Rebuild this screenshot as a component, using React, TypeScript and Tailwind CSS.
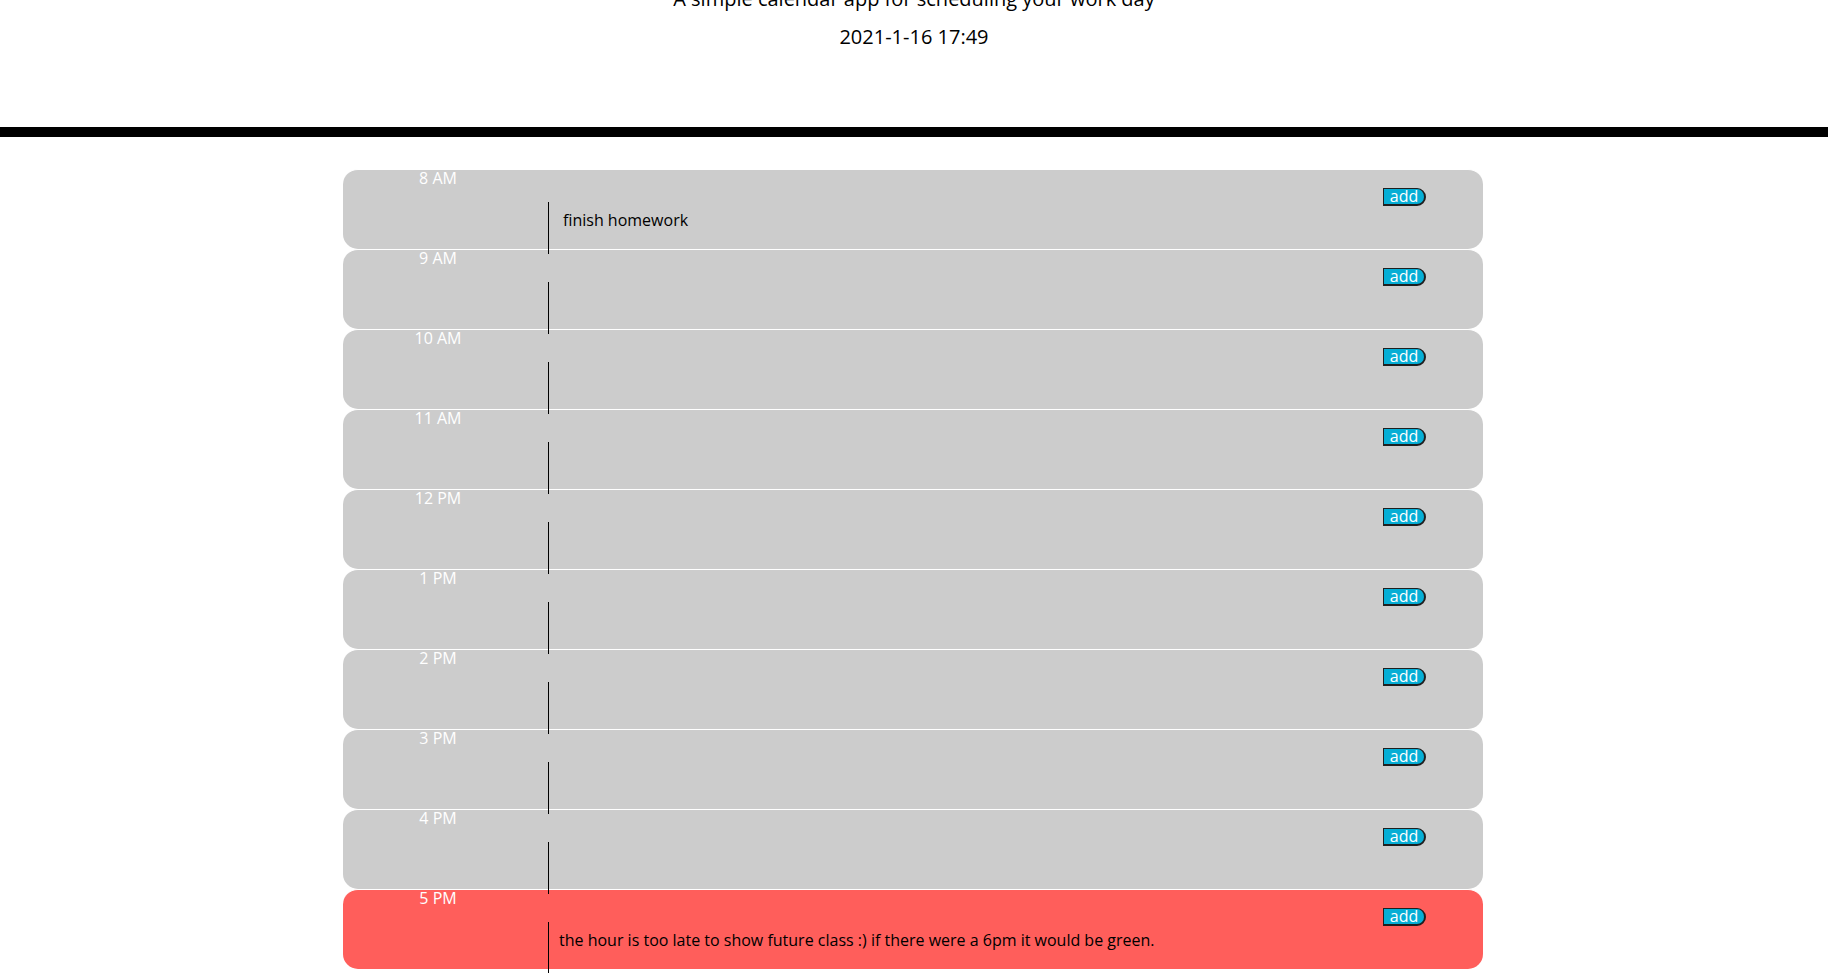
import React from "react";

const hours = ["8 AM", "9 AM", "10 AM", "11 AM", "12 PM", "1 PM", "2 PM", "3 PM", "4 PM", "5 PM"];

const notes: Record<string, string> = {
  "8 AM": "finish homework",
  "5 PM": "the hour is too late to show future class :) if there were a 6pm it would be green.",
};

function Row({ hour }: { hour: string }) {
  const present = hour === "5 PM";
  const text = notes[hour] ?? "";
  return (
    <div
      className={`flex h-[80px] rounded-[15px] border-t border-white ${
        present ? "bg-[#ff5e5b]" : "bg-[#cccccc]"
      }`}
    >
      <div className="w-[190px] shrink-0 text-center text-[16px] leading-[16px] text-white">{hour}</div>
      <div className="w-[760px] shrink-0 px-[15px]">
        <div
          className={`relative mt-[32px] h-[52px] border-l border-black pt-[6px] text-[16px] leading-[24px] text-black whitespace-nowrap ${
            present ? "pl-[10px]" : "pl-[14px]"
          }`}
        >
          {text}
        </div>
      </div>
      <div className="w-[190px] shrink-0 pl-[90px] pt-[18px]">
        <button className="flex h-[18px] w-[43px] items-center justify-center rounded-r-[9px] border border-b-2 border-r-2 border-[#1f1f1f] bg-[#06aed5] pb-[1px] text-[16px] leading-[16px] text-white">
          add
        </button>
      </div>
    </div>
  );
}

export default function App() {
  return (
    <div className="min-h-screen bg-white font-['Open_Sans',sans-serif] text-black">
      <header className="flex h-[137px] flex-col items-center border-b-[10px] border-black">
        <p className="mt-[-16px] text-[20px] leading-[30px]">
          A simple calendar app for scheduling your work day
        </p>
        <p className="mt-[8px] text-[20px] leading-[30px]">2021-1-16 17:49</p>
      </header>
      <div className="flex justify-center pr-[2px]">
        <main className="mt-[32px] w-[1140px]">
          {hours.map((h) => (
            <Row key={h} hour={h} />
          ))}
        </main>
      </div>
    </div>
  );
}
